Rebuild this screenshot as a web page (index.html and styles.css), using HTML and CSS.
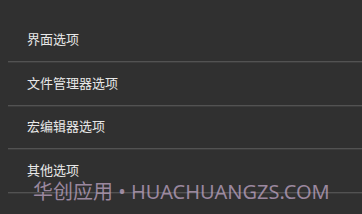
FILE: index.html
```html
<!DOCTYPE html>
<html lang="zh">
<head>
<meta charset="utf-8">
<link rel="stylesheet" href="styles.css">
</head>
<body>
<div class="screen">
  <ul class="list">
    <li class="item">界面选项</li>
    <li class="item">文件管理器选项</li>
    <li class="item">宏编辑器选项</li>
    <li class="item">其他选项</li>
  </ul>
  <div class="watermark">华创应用 • HUACHUANGZS.COM</div>
</div>
</body>
</html>
```

FILE: styles.css
```css
html, body {
  margin: 0;
  padding: 0;
  background: #303030;
}
.screen {
  position: relative;
  width: 362px;
  height: 214px;
  overflow: hidden;
  background: #303030;
  font-family: "Noto Sans CJK SC", "Noto Sans", sans-serif;
}
.list {
  list-style: none;
  margin: 0;
  padding: 19.5px 0 0 8px;
}
.item {
  height: 38.5px;
  box-sizing: content-box;
  display: flex;
  align-items: center;
  padding: 0 0 3px 19px;
  font-size: 13px;
  color: #e8e8e8;
  border-bottom: 1px solid #525252;
  box-shadow: 0 1px 0 #3c3c3c;
  margin-bottom: 1px;
}
.watermark {
  position: absolute;
  left: 33px;
  top: 179px;
  font-family: "Noto Sans", "Noto Sans CJK SC", sans-serif;
  font-size: 20px;
  line-height: 26px;
  color: rgba(190, 165, 195, 0.75);
  white-space: nowrap;
}
```
